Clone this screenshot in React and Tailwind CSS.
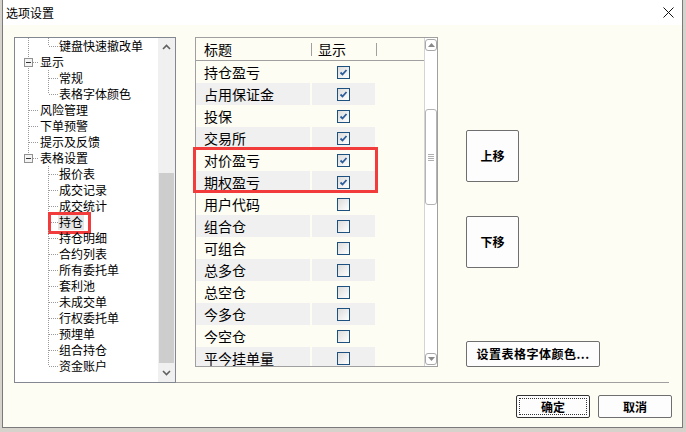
import React from 'react';

const treeItems = [
  { t: '键盘快速撤改单', l: 2, v1: 'full', v2: 'top' },
  { t: '显示', l: 1, exp: true, v1: 'full' },
  { t: '常规', l: 2, v1: 'full', v2: 'full' },
  { t: '表格字体颜色', l: 2, v1: 'full', v2: 'top' },
  { t: '风险管理', l: 1, v1: 'full' },
  { t: '下单预警', l: 1, v1: 'full' },
  { t: '提示及反馈', l: 1, v1: 'full' },
  { t: '表格设置', l: 1, exp: true, v1: 'top' },
  { t: '报价表', l: 2, v2: 'full' },
  { t: '成交记录', l: 2, v2: 'full' },
  { t: '成交统计', l: 2, v2: 'full' },
  { t: '持仓', l: 2, v2: 'full', sel: true },
  { t: '持仓明细', l: 2, v2: 'full' },
  { t: '合约列表', l: 2, v2: 'full' },
  { t: '所有委托单', l: 2, v2: 'full' },
  { t: '套利池', l: 2, v2: 'full' },
  { t: '未成交单', l: 2, v2: 'full' },
  { t: '行权委托单', l: 2, v2: 'full' },
  { t: '预埋单', l: 2, v2: 'full' },
  { t: '组合持仓', l: 2, v2: 'full' },
  { t: '资金账户', l: 2, v2: 'top' },
];

const columns = [
  { t: '持仓盈亏', on: true },
  { t: '占用保证金', on: true },
  { t: '投保', on: true },
  { t: '交易所', on: true },
  { t: '对价盈亏', on: true },
  { t: '期权盈亏', on: true },
  { t: '用户代码', on: false },
  { t: '组合仓', on: false },
  { t: '可组合', on: false },
  { t: '总多仓', on: false },
  { t: '总空仓', on: false },
  { t: '今多仓', on: false },
  { t: '今空仓', on: false },
  { t: '平今挂单量', on: false },
];

const dot = { stroke: '#9a9a9a', strokeWidth: 1, strokeDasharray: '1 1', shapeRendering: 'crispEdges' };

const TreeLines = ({ item }) => (
  <svg width="44" height="16" className="absolute left-0 top-0">
    {item.v1 === 'full' && <line x1="13.5" y1="0" x2="13.5" y2="16" {...dot} />}
    {item.v1 === 'top' && <line x1="13.5" y1="0" x2="13.5" y2="8" {...dot} />}
    {item.v2 === 'full' && <line x1="33.5" y1="0" x2="33.5" y2="16" {...dot} />}
    {item.v2 === 'top' && <line x1="33.5" y1="0" x2="33.5" y2="8" {...dot} />}
    {item.l === 1 && <line x1="14" y1="8.5" x2="24" y2="8.5" {...dot} />}
    {item.l === 2 && <line x1="34" y1="8.5" x2="43" y2="8.5" {...dot} />}
    {item.exp && (
      <g shapeRendering="crispEdges">
        <rect x="9.5" y="4.5" width="8" height="8" fill="#f4f4f4" stroke="#919191" />
        <line x1="11" y1="8.5" x2="16" y2="8.5" stroke="#333" />
      </g>
    )}
  </svg>
);

const TreeRow = ({ item }) => (
  <div className="relative h-[16px] flex items-center whitespace-nowrap">
    <TreeLines item={item} />
    <span className={item.l === 1 ? 'pl-[25px]' : 'pl-[44px]'}>
      <span className={item.sel ? 'bg-[#e6e6e6] px-[1px] -mx-[1px]' : ''}>{item.t}</span>
    </span>
    {item.sel && (
      <div className="absolute left-[33px] top-[-2px] w-[43px] h-[22px] border-[3px] border-[#f23c3c]" />
    )}
  </div>
);

const Check = ({ on }) => (
  <div className="w-[13px] h-[13px] border border-[#1c5180] bg-gradient-to-br from-[#dcdcdc] to-white flex items-center justify-center">
    {on && (
      <svg width="9" height="9" viewBox="0 0 9 9">
        <path d="M1.5 4.5 L3.5 6.5 L7.5 2" fill="none" stroke="#2b5d9b" strokeWidth="1.8" />
      </svg>
    )}
  </div>
);

const Chevron = ({ up }) => (
  <svg width="9" height="6" viewBox="0 0 9 6">
    <path d={up ? 'M1 5 L4.5 1.5 L8 5' : 'M1 1 L4.5 4.5 L8 1'} fill="none" stroke="#606060" strokeWidth="1.6" />
  </svg>
);

const TinyArrow = ({ up }) => (
  <svg width="7" height="4" viewBox="0 0 7 4">
    <path d={up ? 'M0 4 L3.5 0 L7 4 Z' : 'M0 0 L3.5 4 L7 0 Z'} fill="#8a8a8a" />
  </svg>
);

const Btn = ({ className = '', children }) => (
  <div
    className={`flex items-center justify-center bg-[#fdfdfd] border border-[#6f6f6f] rounded-[2px] font-bold text-[12px] text-black ${className}`}
  >
    {children}
  </div>
);

export default function App() {
  return (
    <div className="w-[686px] h-[432px] bg-[#d6d3cc] overflow-hidden font-['Noto_Sans_CJK_SC','Noto_Sans',sans-serif] text-black">
      <div className="ml-[2px] w-[681px] h-[428px] border border-[#7a7a7a] border-t-0 flex flex-col">
        {/* title bar */}
        <div className="h-[25px] bg-white flex items-center justify-between pl-[3px] pr-[8px] shrink-0">
          <span className="text-[12px] leading-none">选项设置</span>
          <svg width="11" height="11" viewBox="0 0 11 11">
            <path d="M0.5 0.5 L10.5 10.5 M10.5 0.5 L0.5 10.5" stroke="#111" strokeWidth="1" />
          </svg>
        </div>

        <div className="flex-1 bg-[#fdfdf4] flex flex-col pt-[12px]">
          <div className="flex">
            {/* tree */}
            <div className="ml-[11px] w-[162px] h-[346px] border border-[#828790] bg-white flex text-[12px] leading-none">
              <div className="flex-1 pt-[0px] overflow-hidden">
                {treeItems.map((it) => (
                  <TreeRow key={it.t} item={it} />
                ))}
              </div>
              <div className="w-[17px] bg-[#f0f0f0] flex flex-col">
                <div className="h-[17px] flex items-center justify-center">
                  <Chevron up />
                </div>
                <div className="h-[118px]" />
                <div className="mx-[1px] h-[190px] bg-[#cdcdcd]" />
                <div className="flex-1 flex items-center justify-center">
                  <Chevron />
                </div>
              </div>
            </div>

            <div className="flex-1 h-[346px] flex flex-col">
              <div className="flex">
                {/* column table */}
                <div className="relative ml-[19px] w-[243px] h-[330px] border border-[#a0a0a0] flex text-[14px] leading-none">
                  <div className="flex-1 overflow-hidden">
                    <div className="h-[23px] flex items-center border-b border-[#a0a0a0]">
                      <div className="w-[116px] pl-[8px] flex items-center justify-between">
                        <span>标题</span>
                        <span className="w-px h-[13px] bg-[#a0a0a0]" />
                      </div>
                      <div className="w-[65px] pl-[6px] flex items-center justify-between">
                        <span>显示</span>
                        <span className="w-px h-[13px] bg-[#a0a0a0]" />
                      </div>
                    </div>
                    {columns.map((c, i) => (
                      <div key={c.t} className="h-[22px] flex">
                        <div className={`w-[114px] pl-[8px] flex items-center ${i % 2 ? 'bg-[#f0f0f0]' : ''}`}>
                          {c.t}
                        </div>
                        <div className={`ml-[2px] w-[63px] flex items-center justify-center ${i % 2 ? 'bg-[#f0f0f0]' : ''}`}>
                          <Check on={c.on} />
                        </div>
                      </div>
                    ))}
                  </div>
                  <div className="w-[13px] bg-white border-l border-[#d4d4d4] flex flex-col items-center py-[1px]">
                    <div className="w-[12px] h-[12px] border border-[#a8a8a8] rounded-[3px] flex items-center justify-center">
                      <TinyArrow up />
                    </div>
                    <div className="h-[58px]" />
                    <div className="w-[12px] h-[96px] border border-[#b4b4b4] rounded-[3px] flex flex-col items-center justify-center gap-[1px]">
                      {[0, 1, 2, 3].map((k) => (
                        <span key={k} className="w-[6px] h-px bg-[#b0b0b0]" />
                      ))}
                    </div>
                    <div className="flex-1" />
                    <div className="w-[12px] h-[12px] border border-[#a8a8a8] rounded-[3px] flex items-center justify-center">
                      <TinyArrow />
                    </div>
                  </div>
                  <div className="absolute left-[-3px] top-[109px] w-[185px] h-[46px] border-[3px] border-[#f23c3c]" />
                </div>

                {/* side buttons */}
                <div className="ml-[28px] pt-[93px] flex flex-col items-start">
                  <Btn className="w-[53px] h-[52px]">上移</Btn>
                  <Btn className="mt-[34px] w-[53px] h-[52px]">下移</Btn>
                  <Btn className="mt-[73px] w-[134px] h-[26px] tracking-[0.5px]">设置表格字体颜色...</Btn>
                </div>
              </div>
              <div className="mt-auto h-px bg-[#a0a0a0] mr-[13px]" />
            </div>
          </div>

          {/* bottom buttons */}
          <div className="mt-[12px] flex justify-end gap-[8px] pr-[10px]">
            <div className="w-[74px] h-[23px] border border-[#333] rounded-[2px] bg-[#fdfdfd] p-[2px]">
              <div className="w-full h-full border border-dotted border-[#333] flex items-center justify-center font-bold text-[12px]">
                确定
              </div>
            </div>
            <Btn className="w-[74px] h-[23px]">取消</Btn>
          </div>
        </div>
      </div>
    </div>
  );
}
